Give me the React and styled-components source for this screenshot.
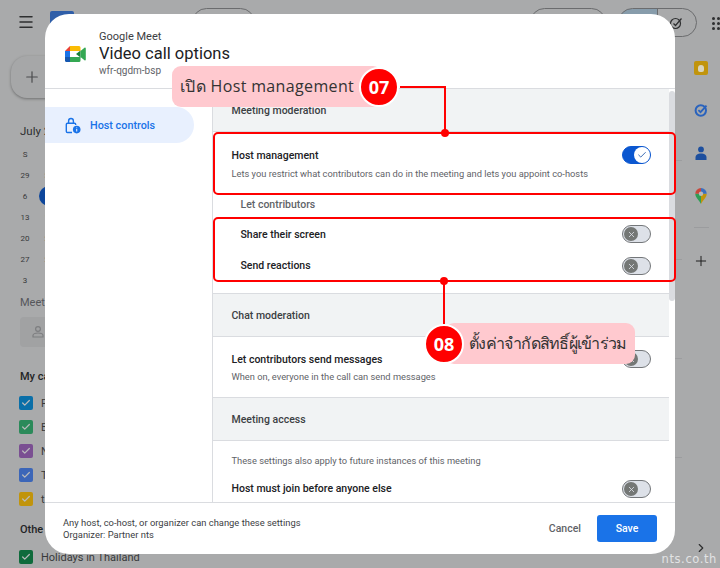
import React from "react"
import styled, { createGlobalStyle } from "styled-components"
import { Menu, Plus, ChevronRight, Check, X } from "lucide-react"

const GlobalStyle = createGlobalStyle`
  html, body {
    margin: 0;
    padding: 0;
    background: #a9aaab;
  }
  * {
    box-sizing: border-box;
  }
`

const Page = styled.div`
  position: relative;
  width: 720px;
  height: 568px;
  overflow: hidden;
  display: flex;
  flex-direction: column;
  background: #a9aaab;
  font-family: Roboto, "Liberation Sans", sans-serif;
  color: #2e2f30;
`

const TopBar = styled.header`
  height: 44px;
  display: flex;
  align-items: flex-start;
  padding: 8px 0 0 17px;
`

const MenuButton = styled.div`
  width: 18px;
  height: 28px;
  flex: none;
  display: flex;
  align-items: center;
  color: #2e2f30;
  margin-right: 15px;
`

const LogoSquare = styled.div`
  width: 24px;
  height: 24px;
  flex: none;
  margin-top: 3px;
  background: #2f5ea8;
  border-radius: 2px;
`

const Pill = styled.div`
  width: ${({ $width }) => $width}px;
  height: 29px;
  flex: none;
  margin-left: ${({ $gap }) => $gap}px;
  border: 1px solid #6b6c6e;
  border-radius: 15px;
`

const Segmented = styled.div`
  width: 79px;
  height: 29px;
  flex: none;
  margin-left: 12px;
  display: flex;
  justify-content: flex-end;
  align-items: center;
  padding-right: 13px;
  border: 1px solid #6b6c6e;
  border-radius: 15px;
  overflow: hidden;
  background: linear-gradient(to right, #879cab 0 38px, #6b6c6e 38px 39px, #a9aaab 39px);
`

const AppsGrid = styled.div`
  flex: none;
  display: grid;
  grid-template-columns: repeat(3, 3px);
  gap: 2px;
  margin: 9px 0 0 15px;

  i {
    width: 3px;
    height: 3px;
    border-radius: 50%;
    background: #2e2f30;
  }
`

const Workspace = styled.div`
  flex: 1;
  display: flex;
`

const SideBar = styled.aside`
  width: 198px;
  flex: none;
  padding: 12px 0 0 11px;
  font-size: 11px;
`

const CreateButton = styled.div`
  width: 90px;
  height: 42px;
  display: flex;
  align-items: center;
  padding-left: 12px;
  border-radius: 16px;
  background: #a6a7a8;
  box-shadow: 0 1px 3px rgba(0, 0, 0, 0.35);
  color: #4b4c4e;
`

const MonthLabel = styled.div`
  margin: 26px 0 0 9px;
  white-space: nowrap;
  font-size: 11.5px;
  line-height: 14px;
  color: #2e2f30;
`

const MiniCalendar = styled.div`
  display: grid;
  grid-template-columns: repeat(2, 24px);
  grid-auto-rows: 21px;
  margin: 6px 0 0 2px;
`

const DayCell = styled.span`
  display: flex;
  align-items: center;
  justify-content: center;
  font-size: 8px;
  color: #38393a;
`

const TodayCell = styled(DayCell)`
  width: 20px;
  height: 20px;
  border-radius: 50%;
  background: #0d469b;
  margin-left: 2px;
`

const SideHeading = styled.div`
  margin: ${({ $top }) => $top}px 0 0 9px;
  white-space: nowrap;
  font-size: 11px;
  font-weight: ${({ $bold }) => ($bold ? 500 : 400)};
  line-height: 14px;
  color: ${({ $bold }) => ($bold ? "#232425" : "#55565a")};
`

const SearchPeople = styled.div`
  width: 60px;
  height: 30px;
  margin: 7px 0 0 9px;
  display: flex;
  align-items: center;
  padding-left: 12px;
  border-radius: 4px;
  background: #a1a2a3;
  color: #7d7e80;
`

const CalendarRows = styled.div`
  display: flex;
  flex-direction: column;
  gap: 10px;
  margin: ${({ $top }) => $top}px 0 0 8px;
`

const CalendarRow = styled.div`
  display: flex;
  align-items: center;
  gap: 8px;
  height: 14px;
  font-size: 11px;
  color: #38393a;
  white-space: nowrap;
`

const CalendarCheck = styled.span`
  width: 14px;
  height: 14px;
  flex: none;
  display: flex;
  align-items: center;
  justify-content: center;
  border-radius: 2px;
  color: #b9babb;
  background: ${({ $color }) => $color};
`

const Grid = styled.main`
  flex: 1;
  margin-top: 18px;
  height: 493px;
  background-image: repeating-linear-gradient(to bottom, #a9aaab 0 98px, #9c9d9f 98px 99px);
`

const RightRail = styled.aside`
  width: 38px;
  flex: none;
  display: flex;
  flex-direction: column;
  align-items: center;
  padding-top: 17px;
  background: #a9aaab;
`

const KeepIcon = styled.div`
  width: 14px;
  height: 14px;
  border-radius: 2px;
  display: flex;
  align-items: center;
  justify-content: center;
  background: #c1940c;

  i {
    width: 6px;
    height: 7px;
    border-radius: 3px 3px 2px 2px;
    background: #d9d4bd;
  }
`

const RailIcon = styled.svg`
  display: block;
  flex: none;
  margin-top: ${({ $top }) => $top}px;
`

const RailDivider = styled.div`
  width: 15px;
  height: 1px;
  flex: none;
  margin-top: 23px;
  background: #9b9c9e;
`

const RailPlus = styled.div`
  margin-top: 25px;
  height: 16px;
  color: #1f1f1f;
`

const RailChevron = styled.div`
  margin-top: 271px;
  height: 14px;
  color: #2e2f30;
`

const Watermark = styled.div`
  position: absolute;
  right: 3px;
  bottom: 2px;
  font-family: "DejaVu Sans", sans-serif;
  font-size: 11.5px;
  letter-spacing: 0.6px;
  line-height: 14px;
  color: #e2e3e4;
`

const Modal = styled.section`
  position: absolute;
  left: 45px;
  top: 14px;
  width: 630px;
  height: 540px;
  display: flex;
  flex-direction: column;
  overflow: hidden;
  border-radius: 24px;
  background: #fff;
`

const ModalHeader = styled.div`
  height: 75px;
  flex: none;
  display: flex;
  align-items: center;
  padding: 0 0 0 20px;
  border-bottom: 1px solid #dadce0;
`

const LogoSlot = styled.div`
  width: 21px;
  height: 16px;
  margin-top: 5px;
  flex: none;

  svg {
    display: block;
  }
`

const HeaderText = styled.div`
  margin-left: 13px;
  margin-top: 6px;
`

const Product = styled.div`
  font-size: 11px;
  line-height: 12px;
  color: #3c4043;
`

const Title = styled.h1`
  margin: 0;
  font-size: 16.5px;
  font-weight: 400;
  line-height: 22px;
  color: #202124;
`

const MeetingCode = styled.div`
  font-size: 10px;
  line-height: 12px;
  color: #5f6368;
`

const ModalBody = styled.div`
  flex: 1;
  min-height: 0;
  display: flex;
`

const Nav = styled.nav`
  width: 168px;
  flex: none;
  padding-top: 18px;
  border-right: 1px solid #dadce0;
`

const NavItem = styled.div`
  width: 149px;
  height: 36px;
  display: flex;
  align-items: center;
  gap: 9px;
  padding-left: 20px;
  border-radius: 0 18px 18px 0;
  background: #e8f0fe;
  font-size: 10.8px;
  font-weight: 500;
  color: #1a73e8;
`

const Settings = styled.div`
  flex: 1;
  min-width: 0;
  overflow: hidden;
`

const Band = styled.div`
  height: ${({ $height }) => $height}px;
  display: flex;
  align-items: center;
  padding-left: 18.5px;
  background: #f1f3f4;
  border-bottom: 1px solid #dadce0;
  font-size: 10.5px;
  font-weight: 500;
  color: #3c4043;
`

const Row = styled.div`
  display: flex;
  justify-content: space-between;
  align-items: flex-start;
  height: ${({ $height }) => $height}px;
  padding: ${({ $top }) => $top}px 18px 0 ${({ $indent }) => ($indent ? 27.5 : 18.5)}px;
  border-bottom: ${({ $line }) => ($line ? "1px solid #dadce0" : "none")};
`

const RowTitle = styled.div`
  font-size: 10.5px;
  font-weight: 500;
  line-height: 14px;
  color: #202124;
`

const RowNote = styled.div`
  margin-top: ${({ $gap }) => $gap}px;
  font-size: 9.3px;
  line-height: 11px;
  color: #5f6368;
`

const SubLabel = styled.div`
  height: 22px;
  padding: 4px 0 0 27.5px;
  font-size: 10.5px;
  font-weight: 500;
  line-height: 14px;
  color: #5f6368;
`

const Toggle = styled.div`
  flex: none;
  width: 29px;
  height: 18px;
  margin-top: ${({ $offset }) => $offset || 0}px;
  display: flex;
  align-items: center;
  justify-content: ${({ $on }) => ($on ? "flex-end" : "flex-start")};
  padding: 0 ${({ $on }) => ($on ? 0 : 1)}px;
  border-radius: 9px;
  background: ${({ $on }) => ($on ? "#0b57d0" : "#dde1e8")};
  border: 1px solid ${({ $on }) => ($on ? "#0b57d0" : "#74777a")};
`

const Knob = styled.span`
  width: ${({ $on }) => ($on ? 16 : 14)}px;
  height: ${({ $on }) => ($on ? 16 : 14)}px;
  display: flex;
  align-items: center;
  justify-content: center;
  border-radius: 50%;
  background: ${({ $on }) => ($on ? "#fff" : "#747775")};
  color: ${({ $on }) => ($on ? "#174ea6" : "#dde1e8")};
`

const ScrollTrack = styled.div`
  width: 6px;
  flex: none;
  align-self: flex-start;
  height: 210px;
  margin-top: 2px;
  border-radius: 3px;
  background: #dadce0;
`

const ModalFooter = styled.div`
  height: 52px;
  flex: none;
  display: flex;
  align-items: center;
  padding: 0 18px 0 18px;
  border-top: 1px solid #dadce0;
`

const FooterText = styled.div`
  flex: 1;
  font-size: 9.4px;
  line-height: 12px;
  color: #3c4043;
`

const CancelButton = styled.button`
  border: none;
  padding: 0;
  margin-right: 16px;
  background: none;
  font: 500 10.5px Roboto, sans-serif;
  color: #5f6368;
`

const SaveButton = styled.button`
  width: 60px;
  height: 27px;
  border: none;
  border-radius: 3px;
  background: #1a73e8;
  font: 500 10.5px Roboto, sans-serif;
  color: #fff;
`

const HighlightBox = styled.div`
  position: absolute;
  left: 213px;
  top: ${({ $top }) => $top}px;
  width: 463px;
  height: ${({ $height }) => $height}px;
  border: 2px solid #ff0000;
  border-radius: 5px;
`

const Connectors = styled.svg`
  position: absolute;
  left: 0;
  top: 0;
  pointer-events: none;
`

const Callout = styled.div`
  position: absolute;
  left: ${({ $left }) => $left}px;
  top: ${({ $top }) => $top}px;
  width: ${({ $width }) => $width}px;
  height: 41px;
  display: flex;
  align-items: center;
  padding-left: ${({ $pad }) => $pad}px;
  border-radius: 9px;
  background: #ffc9cf;
  font-family: "Open Sans", "DejaVu Sans", sans-serif;
  font-size: ${({ $size }) => $size}px;
  letter-spacing: ${({ $track }) => $track || 0}px;
  white-space: nowrap;
  color: #333;
`

const Badge = styled.div`
  position: absolute;
  left: ${({ $left }) => $left}px;
  top: ${({ $top }) => $top}px;
  width: 40px;
  height: 40px;
  display: flex;
  align-items: center;
  justify-content: center;
  border: 2px solid #fff;
  border-radius: 50%;
  background: #ff0000;
  font-family: "Open Sans", sans-serif;
  font-size: 18px;
  font-weight: 700;
  color: #fff;
`

const MeetLogo = () => (
  <svg width="21" height="16" viewBox="0 0 21 16">
    <path d="M5 5h10.5v6H5z" fill="#fff" />
    <path d="M0 5 5 0v5z" fill="#ea4335" />
    <path d="M5 0h9a1.5 1.5 0 0 1 1.5 1.5V5H5z" fill="#fbbc04" />
    <path d="M0 5h5v6H0z" fill="#1a73e8" />
    <path d="M0 11h5v5H1.5A1.5 1.5 0 0 1 0 14.5z" fill="#1557b0" />
    <path d="M5 11h10.5v3.5A1.5 1.5 0 0 1 14 16H5z" fill="#34a853" />
    <path d="M11 8l4.5-3.5v7z" fill="#188038" />
    <path d="M15.5 5l4-3.2c.6-.5 1.3-.1 1.3.7v11c0 .8-.7 1.2-1.3.7l-4-3.2z" fill="#34a853" />
  </svg>
)

const HostIcon = () => (
  <svg width="16" height="17" viewBox="0 0 16 17" fill="none">
    <path
      d="M7 15.5H2.5A1.2 1.2 0 0 1 1.3 14.3V7.4a1.2 1.2 0 0 1 1.2-1.2h7a1.2 1.2 0 0 1 1.2 1.2v.6"
      stroke="#1a73e8"
      strokeWidth="1.4"
    />
    <path d="M3.6 6V3.9a2.4 2.4 0 0 1 4.8 0V6" stroke="#1a73e8" strokeWidth="1.4" />
    <circle cx="11.7" cy="12.6" r="3.8" fill="#1a73e8" />
    <path d="M11.7 12v2.4M11.7 10.4v.8" stroke="#e8f0fe" strokeWidth="1.1" />
  </svg>
)

const ToggleSwitch = ({ on, offset }) => (
  <Toggle $on={on} $offset={offset}>
    <Knob $on={on}>
      {on ? <Check size={10} strokeWidth={2} /> : <X size={9} strokeWidth={2.2} />}
    </Knob>
  </Toggle>
)

const dayRows = [
  ["S", "M"],
  ["29", "30"],
  ["6", "7"],
  ["13", "14"],
  ["20", "21"],
  ["27", "28"],
  ["3", "4"],
]

const calendars = [
  ["#0a6fa8", "P"],
  ["#2b8a5a", "B"],
  ["#7a4f92", "N"],
  ["#3c66b8", "T"],
  ["#c1940c", "t"],
]

const App = () => (
  <Page>
    <GlobalStyle />
    <TopBar>
      <MenuButton>
        <Menu size={18} strokeWidth={2} />
      </MenuButton>
      <LogoSquare />
      <Pill $width={63} $gap={118} />
      <Pill $width={76} $gap={275} />
      <Segmented>
        <svg width="14" height="14" viewBox="0 0 14 14" fill="none" stroke="#2e2f30" strokeWidth="1.2">
          <circle cx="6.5" cy="7.5" r="5" />
          <path d="M4.5 7.5l2 2 6-7" />
        </svg>
      </Segmented>
      <AppsGrid>
        {Array.from({ length: 9 }, (_, i) => (
          <i key={i} />
        ))}
      </AppsGrid>
    </TopBar>
    <Workspace>
      <SideBar>
        <CreateButton>
          <Plus size={18} strokeWidth={1.6} />
        </CreateButton>
        <MonthLabel>July 2</MonthLabel>
        <MiniCalendar>
          {dayRows.flat().map((day, i) =>
            day === "7" ? (
              <TodayCell key={i}>{day}</TodayCell>
            ) : (
              <DayCell key={i}>{day}</DayCell>
            )
          )}
        </MiniCalendar>
        <SideHeading $top={5}>Meet</SideHeading>
        <SearchPeople>
          <svg width="14" height="12" viewBox="0 0 14 12" fill="none" stroke="currentColor" strokeWidth="1.2">
            <circle cx="6" cy="3" r="2.4" />
            <path d="M1 11V9.5C1 8 3 7 6 7s5 1 5 2.5V11z" />
          </svg>
        </SearchPeople>
        <SideHeading $top={23} $bold>
          My ca
        </SideHeading>
        <CalendarRows $top={12}>
          {calendars.map(([color, name]) => (
            <CalendarRow key={name}>
              <CalendarCheck $color={color}>
                <Check size={10} strokeWidth={3} />
              </CalendarCheck>
              {name}
            </CalendarRow>
          ))}
        </CalendarRows>
        <SideHeading $top={17} $bold>
          Othe
        </SideHeading>
        <CalendarRows $top={13}>
          <CalendarRow>
            <CalendarCheck $color="#0f6b3c">
              <Check size={10} strokeWidth={3} />
            </CalendarCheck>
            Holidays in Thailand
          </CalendarRow>
        </CalendarRows>
      </SideBar>
      <Grid />
      <RightRail>
        <KeepIcon>
          <i />
        </KeepIcon>
        <RailIcon $top={28} width="14" height="14" viewBox="0 0 14 14" fill="none">
          <circle cx="6.8" cy="7.5" r="5.2" stroke="#2a63bd" strokeWidth="2" />
          <path d="M4.4 7.2 6.5 9.2 12.5 2.6" stroke="#2a63bd" strokeWidth="1.8" />
        </RailIcon>
        <RailIcon $top={29} width="14" height="14" viewBox="0 0 14 14">
          <circle cx="7" cy="3.4" r="2.9" fill="#1d4f9e" />
          <path d="M1.5 14v-2.6C1.5 9 4 7.6 7 7.6s5.5 1.4 5.5 3.8V14z" fill="#1d4f9e" />
        </RailIcon>
        <RailIcon $top={28} width="12" height="16" viewBox="0 0 12 16">
          <path d="M6 16C4.5 12.5 0.3 9.7 0.3 5.8L6 5.8z" fill="#2f9e55" />
          <path d="M6 16C7.5 12.5 11.7 9.7 11.7 5.8L6 5.8z" fill="#c1940c" />
          <path d="M0.3 5.8A5.7 5.7 0 0 1 6 0.1V5.8z" fill="#c9463a" />
          <path d="M6 0.1a5.7 5.7 0 0 1 5.7 5.7H6z" fill="#3a6fc0" />
          <circle cx="6" cy="5.8" r="2.2" fill="#b9babb" />
        </RailIcon>
        <RailDivider />
        <RailPlus>
          <Plus size={16} strokeWidth={1.5} />
        </RailPlus>
        <RailChevron>
          <ChevronRight size={14} strokeWidth={2} />
        </RailChevron>
      </RightRail>
    </Workspace>
    <Watermark>nts.co.th</Watermark>

    <Modal>
      <ModalHeader>
        <LogoSlot>
          <MeetLogo />
        </LogoSlot>
        <HeaderText>
          <Product>Google Meet</Product>
          <Title>Video call options</Title>
          <MeetingCode>wfr-qgdm-bsp</MeetingCode>
        </HeaderText>
      </ModalHeader>
      <ModalBody>
        <Nav>
          <NavItem>
            <HostIcon />
            Host controls
          </NavItem>
        </Nav>
        <Settings>
          <Band $height={43}>Meeting moderation</Band>
          <Row $height={62} $top={17}>
            <div>
              <RowTitle>Host management</RowTitle>
              <RowNote $gap={5}>
                Lets you restrict what contributors can do in the meeting and lets you appoint co-hosts
              </RowNote>
            </div>
            <ToggleSwitch on offset={-3} />
          </Row>
          <SubLabel>Let contributors</SubLabel>
          <Row $height={31} $top={12} $indent>
            <RowTitle>Share their screen</RowTitle>
            <ToggleSwitch offset={-3} />
          </Row>
          <Row $height={47} $top={12} $indent $line>
            <RowTitle>Send reactions</RowTitle>
            <ToggleSwitch offset={-2} />
          </Row>
          <Band $height={43}>Chat moderation</Band>
          <Row $height={61} $top={16} $line>
            <div>
              <RowTitle>Let contributors send messages</RowTitle>
              <RowNote $gap={4}>When on, everyone in the call can send messages</RowNote>
            </div>
            <ToggleSwitch offset={-3} />
          </Row>
          <Band $height={43}>Meeting access</Band>
          <Row $height={22} $top={8}>
            <RowNote $gap={6}>These settings also apply to future instances of this meeting</RowNote>
          </Row>
          <Row $height={38} $top={19}>
            <RowTitle>Host must join before anyone else</RowTitle>
            <ToggleSwitch offset={-2} />
          </Row>
        </Settings>
        <ScrollTrack />
      </ModalBody>
      <ModalFooter>
        <FooterText>
          Any host, co-host, or organizer can change these settings
          <br />
          Organizer: Partner nts
        </FooterText>
        <CancelButton>Cancel</CancelButton>
        <SaveButton>Save</SaveButton>
      </ModalFooter>
    </Modal>

    <HighlightBox $top={132} $height={63} />
    <HighlightBox $top={217} $height={65} />
    <Connectors width="720" height="568" viewBox="0 0 720 568" fill="none">
      <path d="M400 87H445V133" stroke="#ff0000" strokeWidth="2" />
      <circle cx="445" cy="133" r="4" fill="#ff0000" />
      <path d="M444 281V324" stroke="#ff0000" strokeWidth="2" />
      <circle cx="444" cy="281" r="4" fill="#ff0000" />
    </Connectors>
    <Callout $left={172} $top={66} $width={210} $pad={8} $size={16} $track={0.35}>
      เปิด Host management
    </Callout>
    <Badge $left={359} $top={67}>07</Badge>
    <Callout $left={445} $top={323} $width={190} $pad={24} $size={16} $track={-0.75}>
      ตั้งค่าจำกัดสิทธิ์ผู้เข้าร่วม
    </Callout>
    <Badge $left={424} $top={324}>08</Badge>
  </Page>
)

export default App
